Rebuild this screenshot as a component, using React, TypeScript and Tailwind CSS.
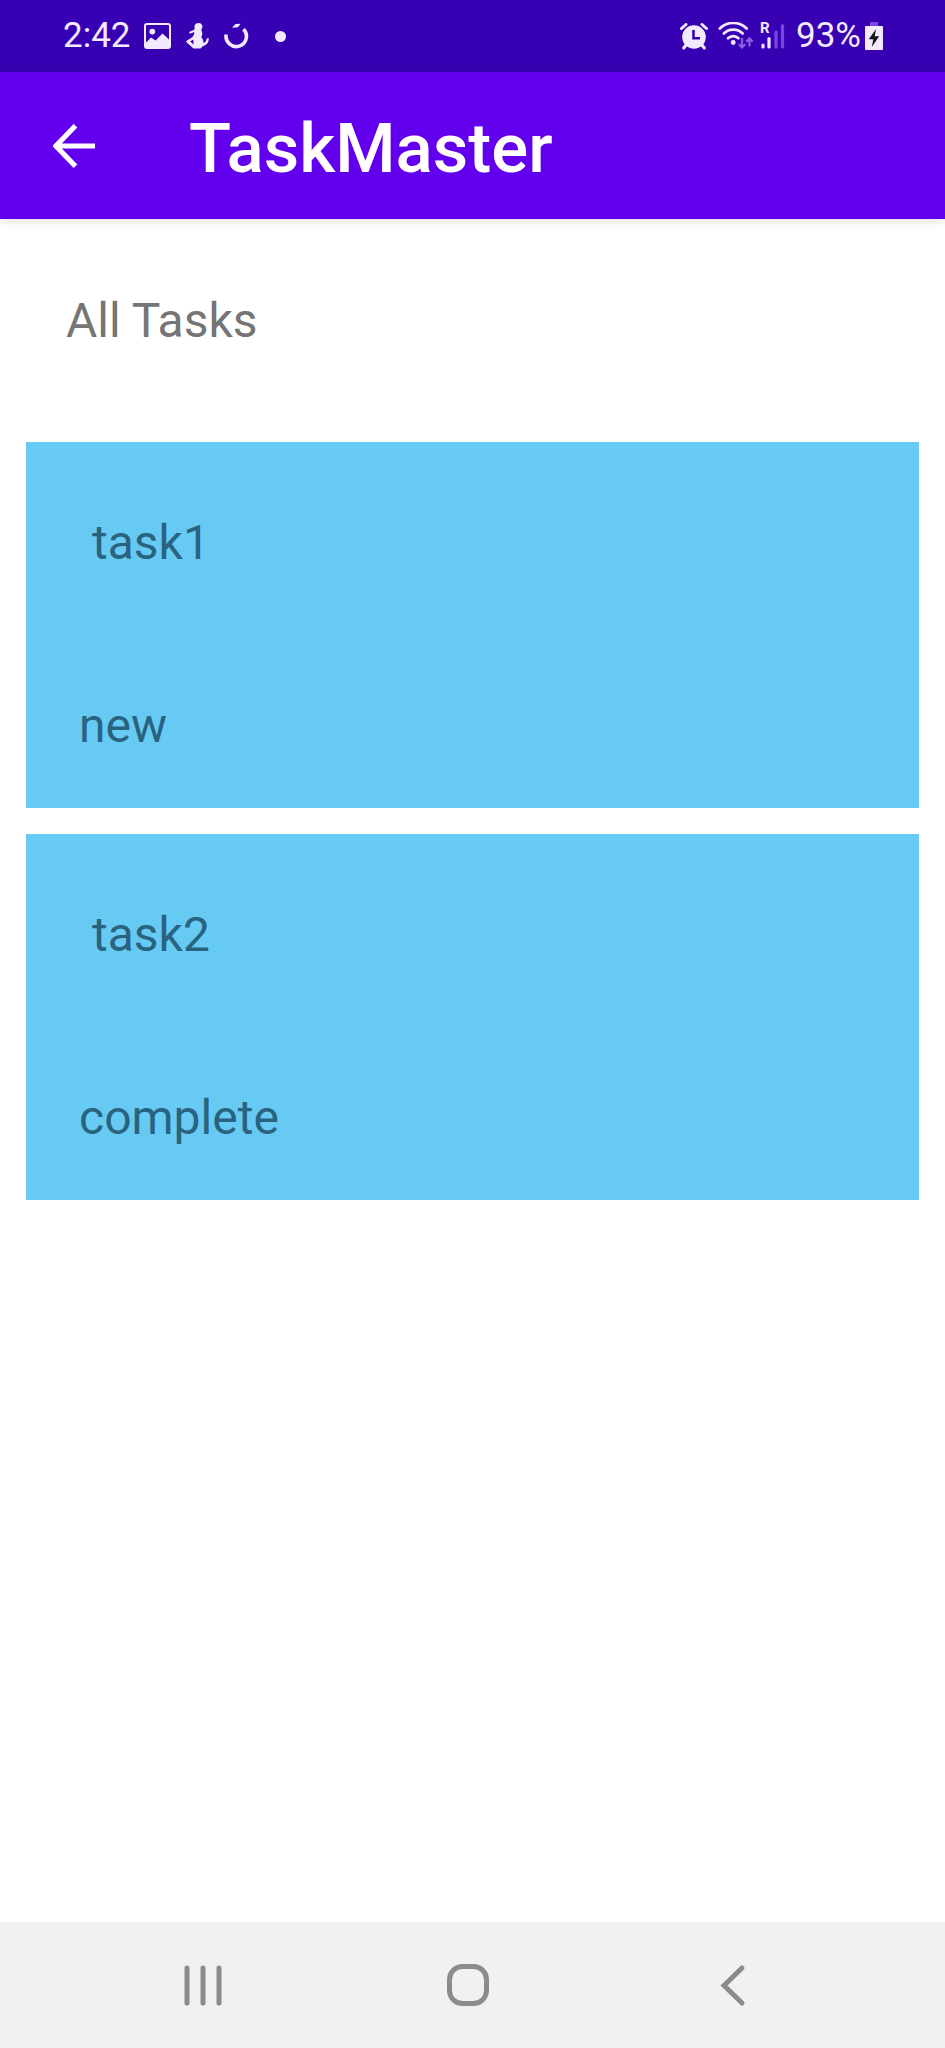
import type { ReactNode } from "react";

type Task = { title: string; state: string };

const tasks: Task[] = [
  { title: "task1", state: "new" },
  { title: "task2", state: "complete" },
];

function PictureIcon() {
  return (
    <svg viewBox="0 0 27 26" className="h-[26px] w-[27px]" aria-hidden="true">
      <rect x="1" y="1" width="25" height="24" rx="2" fill="none" stroke="currentColor" strokeWidth="2" />
      <circle cx="8.300" cy="8.600" r="2.900" fill="currentColor" />
      <path d="M2 19.500 7 14.500 11.500 17.500 18.500 10.500 25 16.500V24H2Z" fill="currentColor" />
    </svg>
  );
}

function FigureIcon() {
  return (
    <svg viewBox="0 0 23 26" className="h-[26px] w-[23px]" aria-hidden="true">
      <path
        d="M12.500 0C15.500 0 16.700 2.200 16.300 4.300C16.100 5.600 15.500 6.300 15.300 7.200C16.800 9.500 16.300 12 15.300 14.300C16.800 16 17.600 17.800 17.500 20C19.700 19.200 20.600 17.600 20.500 15.800L22.700 15C23.200 19.300 20.500 22.300 16.800 23.300L14.500 25.500H7.500L5 23.300C3.800 22 1.500 20.700 0 18.500C2 16.500 4 15.800 6.500 14L8 11.500L8.300 9L4 10.700L3 9L8.300 6.800C9 5.300 8.300 4.500 8.500 3.200C8.900 1.200 10.400 0 12.500 0Z"
        fill="currentColor"
      />
      <path d="M4.200 18.600 7.200 16.600 7.600 21.500Z" fill="#3700b3" />
    </svg>
  );
}

function RingIcon() {
  return (
    <svg viewBox="0 0 25 26" className="h-[26px] w-[25px]" aria-hidden="true">
      <path d="M2.200 11.500A10.200 10.200 0 1 0 19.500 6.200" fill="none" stroke="currentColor" strokeWidth="3.600" />
      <path d="M8 4.800 11.500 1 16.500 .8 14 4.300Z" fill="currentColor" />
    </svg>
  );
}

function AlarmIcon() {
  return (
    <svg viewBox="0 0 28 27" className="h-[27px] w-[28px]" aria-hidden="true">
      <path d="M1.500 5.500 6 1.500M26.500 5.500 22 1.500" stroke="currentColor" strokeWidth="3" strokeLinecap="round" />
      <path d="M6 22 3.700 25M22 22 24.300 25" stroke="currentColor" strokeWidth="3" strokeLinecap="round" />
      <circle cx="14" cy="14" r="11.800" fill="currentColor" />
      <path d="M13.500 7V15.300H20" fill="none" stroke="#3700b3" strokeWidth="2.600" />
    </svg>
  );
}

function WifiIcon() {
  return (
    <svg viewBox="0 0 36 28" className="h-[28px] w-[36px]" aria-hidden="true">
      <g fill="none" stroke="currentColor" strokeWidth="2.600" strokeLinecap="round">
        <path d="M1.800 6.500A19 19 0 0 1 28.700 6.500" />
        <path d="M5.800 11.500A13.500 13.500 0 0 1 24.700 11.500" />
        <path d="M10 16.300A7.500 7.500 0 0 1 20.500 16.300" />
      </g>
      <circle cx="15.200" cy="20.500" r="2.400" fill="currentColor" />
      <g fill="none" stroke="#8a5fe6" strokeWidth="2.200">
        <path d="M24 16V25.500M20.800 22.200 24 25.500 27.200 22.200" />
        <path d="M31.500 24.500V16.500M28.300 19.700 31.500 16.300 34.700 19.700" />
      </g>
    </svg>
  );
}

function SignalIcon() {
  return (
    <span className="relative block h-[28px] w-[25px]">
      <span className="absolute -top-px left-0 text-[15px] leading-[15px] font-bold">R</span>
      <svg viewBox="0 0 25 28" className="h-[28px] w-[25px]" aria-hidden="true">
        <g strokeWidth="3.200" strokeLinecap="round">
          <path d="M3 23V25" stroke="currentColor" />
          <path d="M9 16.500V25" stroke="currentColor" />
          <path d="M16 10V25M22.500 3.500V25" stroke="#7a45e0" />
        </g>
      </svg>
    </span>
  );
}

function BatteryIcon() {
  return (
    <svg viewBox="0 0 18 28" className="h-[28px] w-[18px]" aria-hidden="true">
      <rect x="5" y="0" width="8" height="5" fill="#7a45e0" />
      <rect x="0" y="4" width="18" height="24" rx="1" fill="currentColor" />
      <path d="M11 7 3.800 17.200H8.300L6.800 25 14.200 14.300H9.700Z" fill="#15131c" />
    </svg>
  );
}

function StatusBar() {
  return (
    <div className="flex h-[72px] items-center justify-between bg-[#3700b3] pr-[62px] pl-[63px] text-[35px] leading-[42px] text-[#f3eaff]">
      <div className="flex items-center">
        <time>2:42</time>
        <span className="ml-[13px] flex items-center gap-[15px]">
          <PictureIcon />
          <FigureIcon />
          <RingIcon />
        </span>
        <span className="ml-[26px] size-[11px] rounded-full bg-current" />
      </div>
      <div className="flex items-center">
        <span className="flex items-center gap-[10px]">
          <AlarmIcon />
          <span className="flex items-center gap-[6px]">
            <WifiIcon />
            <SignalIcon />
          </span>
        </span>
        <span className="ml-[11px]">93%</span>
        <span className="ml-[4px]">
          <BatteryIcon />
        </span>
      </div>
    </div>
  );
}

function AppBar() {
  return (
    <header className="relative flex h-[147px] items-center bg-[#6200ee] pl-[42px] text-white shadow-[0_2px_10px_rgba(0,0,0,0.12)]">
      <button type="button" aria-label="Navigate up" className="flex size-[63px] items-center justify-center">
        <svg viewBox="0 0 42 44" className="h-[44px] w-[42px]" aria-hidden="true">
          <path d="M42 22H4M22.500 1.800 2.800 22 22.500 42.200" fill="none" stroke="currentColor" strokeWidth="5.200" />
        </svg>
      </button>
      <h1 className="ml-[84px] pt-[6px] text-[69px] leading-[80px] font-medium">TaskMaster</h1>
    </header>
  );
}

function TaskCard({ task }: { task: Task }) {
  return (
    <li className="bg-[#67caf3] pt-[73px] pb-[54px] text-[#2a6380]">
      <h3 className="pl-[66px]">{task.title}</h3>
      <p className="mt-[127px] pl-[53px]">{task.state}</p>
    </li>
  );
}

function NavButton({ label, children }: { label: string; children: ReactNode }) {
  return (
    <button type="button" aria-label={label} className="flex flex-1 items-center justify-center">
      <svg viewBox="0 0 44 44" className="size-[44px]" fill="none" stroke="#8b8b8b" strokeWidth="5" strokeLinecap="round" aria-hidden="true">
        {children}
      </svg>
    </button>
  );
}

export default function App() {
  return (
    <div className="flex min-h-screen flex-col bg-white font-[Roboto,sans-serif]">
      <StatusBar />
      <AppBar />
      <main className="flex-1 px-[26px] text-[48px] leading-[56px]">
        <h2 className="pt-[74px] pb-[93px] pl-[40px] text-[#757575]">All Tasks</h2>
        <ul className="flex flex-col gap-[26px]">
          {tasks.map((task) => (
            <TaskCard key={task.title} task={task} />
          ))}
        </ul>
      </main>
      <nav className="flex h-[126px] bg-[#f1f1f1] pr-[80px] pl-[71px]">
        <NavButton label="Recent apps">
          <path d="M6 5V40M22 5V40M38 5V40" />
        </NavButton>
        <NavButton label="Home">
          <rect x="3.500" y="3.500" width="37" height="37" rx="13" />
        </NavButton>
        <NavButton label="Back">
          <path d="M31 5 13 22.500 31 40" />
        </NavButton>
      </nav>
    </div>
  );
}
